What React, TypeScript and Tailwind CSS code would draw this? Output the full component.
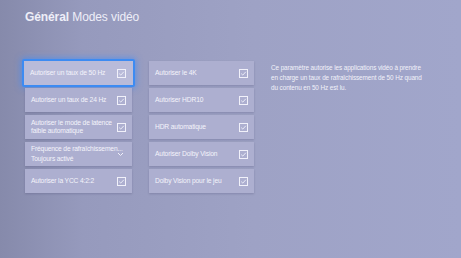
import * as React from "react";

type Tile = { label: string; sub?: string; kind: "check" | "chevron"; focused?: boolean };

const LEFT: Tile[] = [
  { label: "Autoriser un taux de 50 Hz", kind: "check", focused: true },
  { label: "Autoriser un taux de 24 Hz", kind: "check" },
  { label: "Autoriser le mode de latence faible automatique", kind: "check" },
  { label: "Fréquence de rafraîchissemen...", sub: "Toujours activé", kind: "chevron" },
  { label: "Autoriser la YCC 4:2:2", kind: "check" },
];

const RIGHT: Tile[] = [
  { label: "Autoriser le 4K", kind: "check" },
  { label: "Autoriser HDR10", kind: "check" },
  { label: "HDR automatique", kind: "check" },
  { label: "Autoriser Dolby Vision", kind: "check" },
  { label: "Dolby Vision pour le jeu", kind: "check" },
];

function CheckBox() {
  return (
    <svg width="9" height="9" viewBox="0 0 9 9" className="shrink-0">
      <rect x="0.5" y="0.5" width="8" height="8" fill="none" stroke="#f1f1fa" strokeWidth="1" />
      <path d="M2.2 4.6 L3.8 6.1 L6.8 2.8" fill="none" stroke="#f1f1fa" strokeWidth="0.9" />
    </svg>
  );
}

function Chevron() {
  return (
    <svg width="7" height="5" viewBox="0 0 7 5" className="mr-[2px] shrink-0">
      <path d="M1 1 L3.5 3.5 L6 1" fill="none" stroke="#f1f1fa" strokeWidth="1" />
    </svg>
  );
}

function SettingTile({ tile }: { tile: Tile }) {
  return (
    <div
      className={
        tile.focused
          ? "flex h-[28px] -mx-[3px] -my-[2px] items-center justify-between gap-1 rounded-[2px] border-2 border-[#3d8bf2] bg-[#b9bbd9] pl-[6px] pr-[7px] shadow-[0_0_6px_1px_rgba(70,140,245,0.7)]"
          : "flex h-[24px] items-center justify-between gap-1 bg-[#adafd0] pl-[6px] pr-[6px] shadow-[0_1px_2px_rgba(60,60,100,0.25)]"
      }
    >
      <div className="min-w-0 text-[6.7px] leading-[8.5px] tracking-[-0.15px] text-[#f4f4fb]">
        <div className={tile.sub ? "whitespace-nowrap" : ""}>{tile.label}</div>
        {tile.sub && <div className="mt-[2px]">{tile.sub}</div>}
      </div>
      {tile.kind === "check" ? <CheckBox /> : <Chevron />}
    </div>
  );
}

export default function App() {
  return (
    <div
      className="h-[258px] w-[461px] overflow-hidden bg-[linear-gradient(90deg,#868aab_0%,#969abd_18%,#9ea2c5_55%,#a1a6cb_100%)] text-[#eeeef8]"
      style={{ fontFamily: '"Liberation Sans", Arial, sans-serif' }}
    >
      <div className="pl-[25px] pt-[9px] text-[12px] leading-[16px] tracking-[-0.1px]">
        <span className="font-bold">Général</span> <span>Modes vidéo</span>
      </div>
      <div className="mt-[36px] flex pl-[25px]">
        <div className="flex w-[107px] flex-col gap-[3px]">
          {LEFT.map((t) => (
            <SettingTile key={t.label} tile={t} />
          ))}
        </div>
        <div className="ml-[17px] flex w-[105px] flex-col gap-[3px]">
          {RIGHT.map((t) => (
            <SettingTile key={t.label} tile={t} />
          ))}
        </div>
        <div className="ml-[17px] w-[158px] pt-[2px] text-[6.4px] leading-[10px] tracking-[-0.1px] text-[#f2f2fa]">
          Ce paramètre autorise les applications vidéo à prendre en charge un taux de rafraîchissement de 50 Hz quand du contenu en 50 Hz est lu.
        </div>
      </div>
    </div>
  );
}
